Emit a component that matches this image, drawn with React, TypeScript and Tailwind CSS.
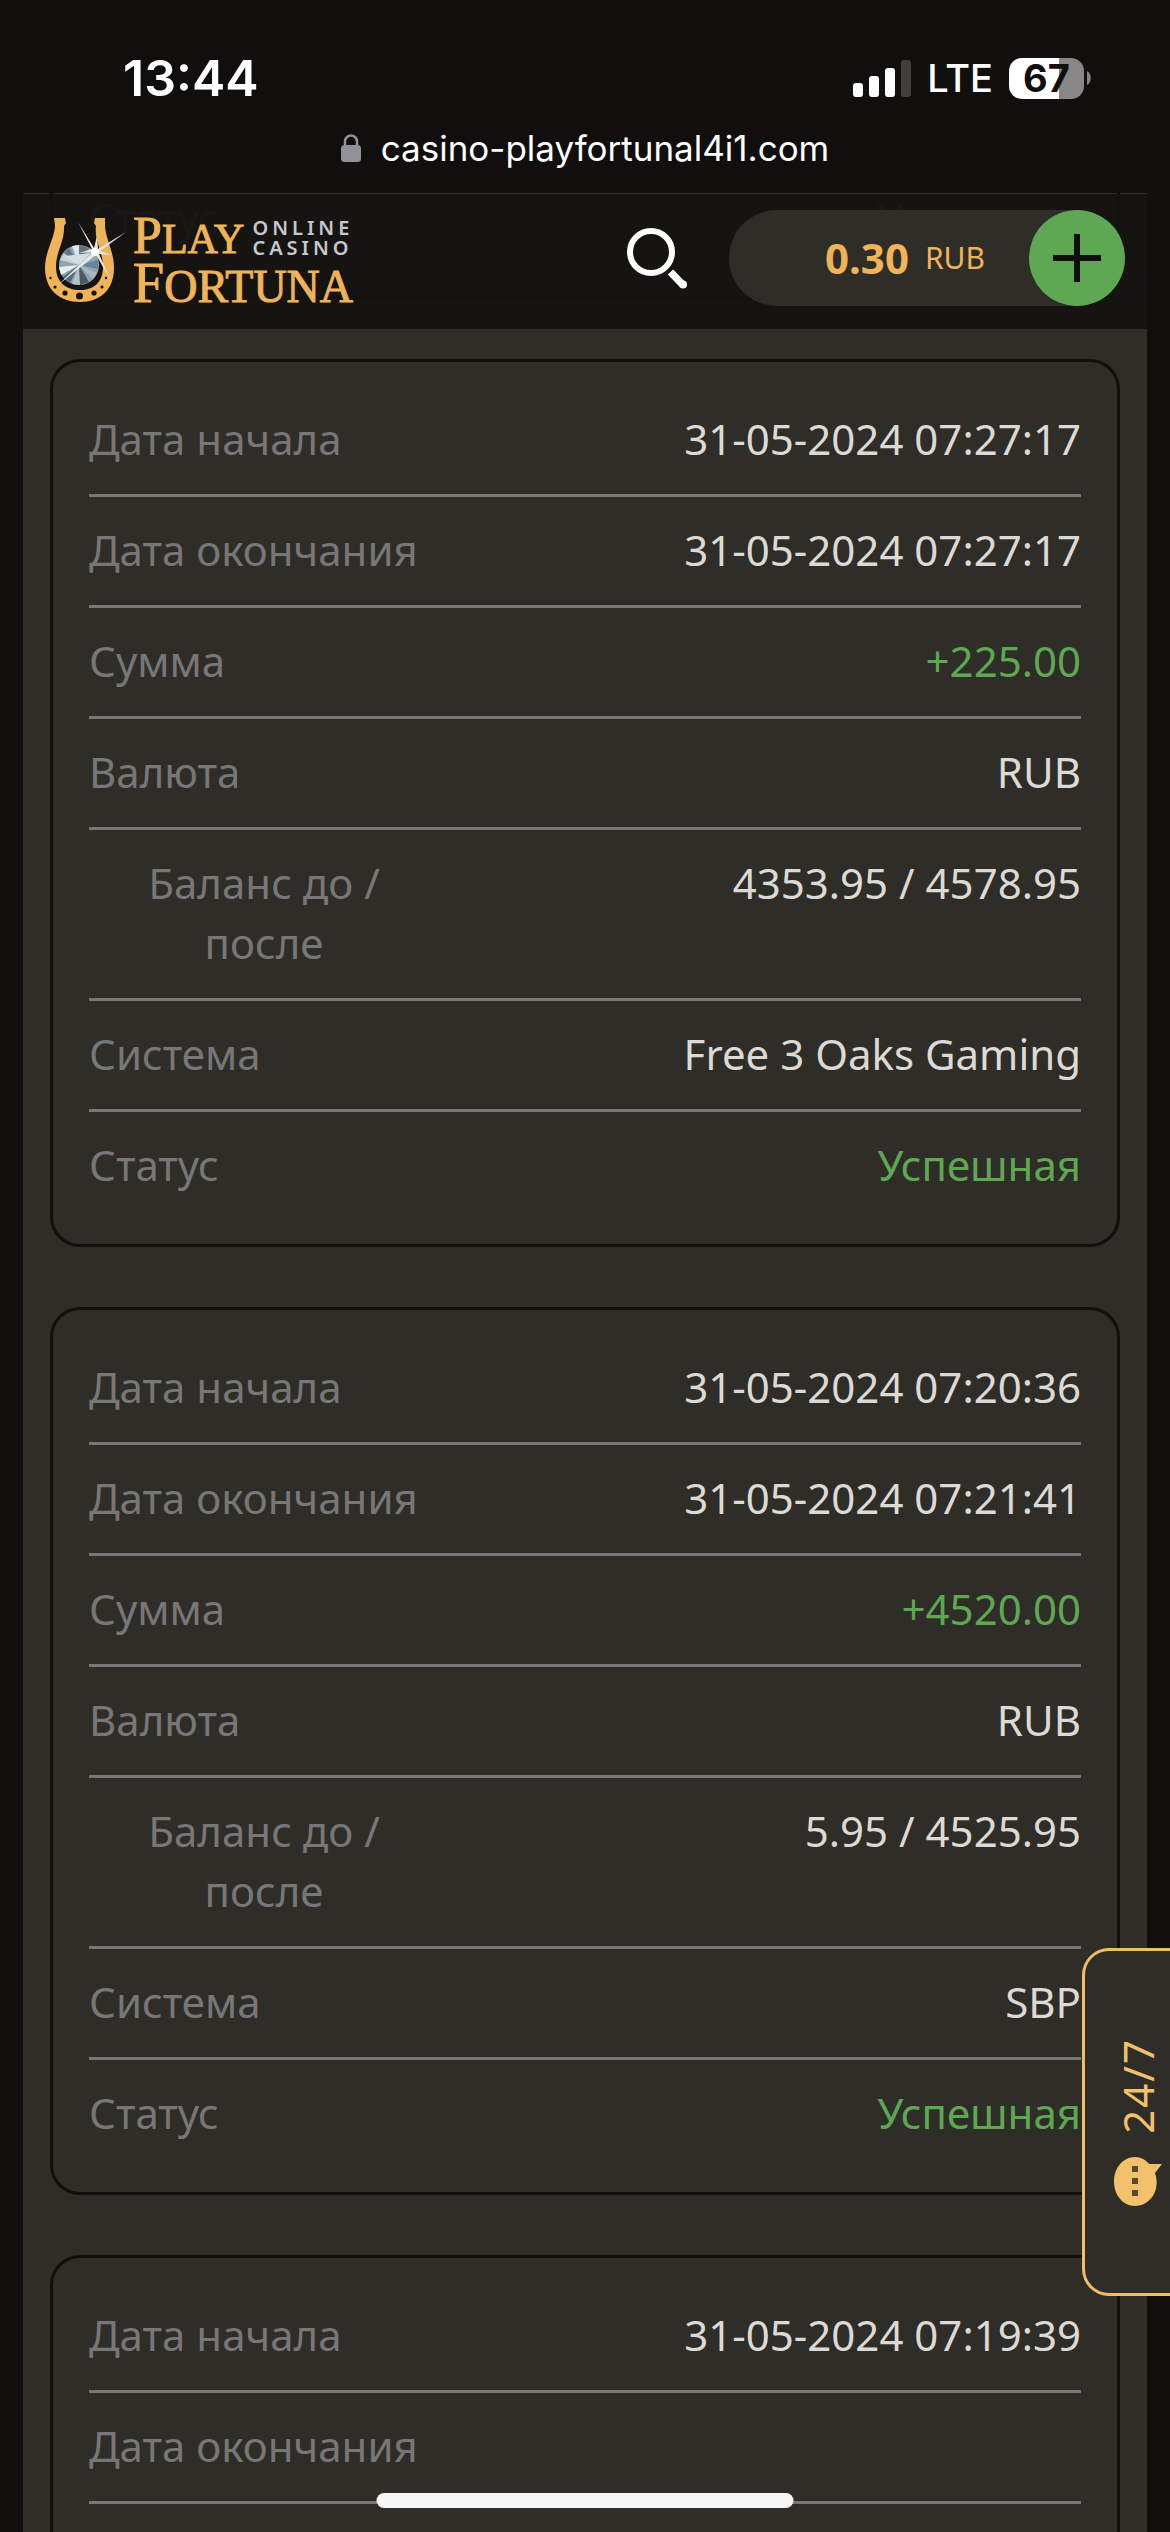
import { Fragment } from "react";

type Operation = {
  start: string;
  end: string;
  amount: string;
  currency: string;
  balance: string;
  system: string;
  status: string;
};

const operations: Operation[] = [
  {
    start: "31-05-2024 07:27:17",
    end: "31-05-2024 07:27:17",
    amount: "+225.00",
    currency: "RUB",
    balance: "4353.95 / 4578.95",
    system: "Free 3 Oaks Gaming",
    status: "Успешная",
  },
  {
    start: "31-05-2024 07:20:36",
    end: "31-05-2024 07:21:41",
    amount: "+4520.00",
    currency: "RUB",
    balance: "5.95 / 4525.95",
    system: "SBP",
    status: "Успешная",
  },
  {
    start: "31-05-2024 07:19:39",
    end: "",
    amount: "",
    currency: "RUB",
    balance: "",
    system: "",
    status: "",
  },
];

function StatusBar() {
  return (
    <div className="flex h-[193px] shrink-0 flex-col bg-[#100f0d] font-['Inter',sans-serif] text-white">
      <div className="flex items-center justify-between pt-12 pr-[79px] pl-[123px]">
        <time className="text-[50px] leading-[60px] font-semibold">13:44</time>
        <div className="flex items-center">
          <svg width="58" height="38" viewBox="0 0 58 38" aria-label="Сигнал">
            <rect x="0" y="24" width="10" height="14" rx="3" fill="#fff" />
            <rect x="16" y="17" width="10" height="21" rx="3" fill="#fff" />
            <rect x="32" y="9" width="10" height="29" rx="3" fill="#fff" />
            <rect x="48" y="1" width="10" height="37" rx="3" fill="#403f3e" />
          </svg>
          <span className="ml-4 text-[38px] leading-[60px] font-medium">LTE</span>
          <div className="ml-4 flex items-center gap-[3px]">
            <div className="flex h-[41px] w-[75px] items-center justify-center rounded-[13px] bg-linear-to-r from-white from-67% to-[#888785] to-67% text-[38px] leading-none font-bold text-[#100f0d]">
              67
            </div>
            <svg width="4" height="14" viewBox="0 0 4 14" aria-hidden="true">
              <path d="M0 0c5 3 5 11 0 14z" fill="#888785" />
            </svg>
          </div>
        </div>
      </div>
      <div className="mt-4 flex items-center justify-center gap-5">
        <svg width="20" height="28" viewBox="0 0 20 28" aria-hidden="true">
          <path d="M4 13V7.500a6 6 0 0 1 12 0V13" fill="none" stroke="#929196" strokeWidth="2.500" />
          <rect x="0" y="11" width="20" height="17" rx="3.500" fill="#929196" />
        </svg>
        <span className="text-[35px] leading-[48px]">casino-playfortunal4i1.com</span>
      </div>
    </div>
  );
}

function Logo() {
  return (
    <a href="#home" aria-label="Play Fortuna" className="mt-1 flex items-center text-[#efb358]">
      <svg width="84" height="86" viewBox="0 0 84 86" aria-hidden="true">
        <path
          d="M9 1h11l1 5-2 3C20 24 11 34 11 50c0 15 10 23 24 23s23-8 23-23C58 34 49 24 51 9l-2-3 1-5h10v7c0 13 9 26 9 43 0 22-14 34-34 34S0 73 0 51C0 34 10 21 10 8z"
          fill="#efb358"
        />
        <circle cx="34.500" cy="79" r="3.500" fill="#151412" />
        <circle cx="20" cy="76" r="2.600" fill="#151412" />
        <circle cx="49" cy="76" r="2.600" fill="#151412" />
        <circle cx="10" cy="70" r="1.600" fill="#151412" />
        <circle cx="57" cy="70" r="1.600" fill="#151412" />
        <circle cx="5.500" cy="61" r="1.200" fill="#151412" />
        <circle cx="61" cy="61" r="1.200" fill="#151412" />
        <circle cx="34" cy="48" r="20" fill="#8fa3ae" />
        <path d="M34 48 27 29l7-1z" fill="#dfe6ea" />
        <path d="M34 48V28l10 3z" fill="#5f7480" />
        <path d="M34 48 15 43l4-7z" fill="#c7d2d9" />
        <path d="M34 48 19 36l5-5z" fill="#617986" />
        <path d="M34 48 14 50l2 8z" fill="#e8edf0" />
        <path d="M34 48 18 60l7 6z" fill="#536873" />
        <path d="m34 48-7 19 8 1z" fill="#b4c2ca" />
        <path d="m34 48 1 20 9-3z" fill="#4b5a60" />
        <path d="m34 48 14 14 4-6z" fill="#a9b9c2" />
        <path d="m34 48 19 4v-9z" fill="#688595" />
        <path d="m34 48-14-9 26-3z" fill="#d5dee3" />
        <path d="M33 5 49 31l3-12 1 13 28-17-26 19 12 4-13-1 11 25-14-24-38 30 35-33-14 1 13-4z" fill="#e6e8e8" />
        <circle cx="50" cy="35" r="4" fill="#fff" />
      </svg>
      <div className="mt-1 ml-1 font-['Liberation_Serif',serif]">
        <div className="flex items-center">
          <span className="text-[42px] leading-[44px] [-webkit-text-stroke:1px_#efb358]">
            <span className="text-[52px]">P</span>LAY
          </span>
          <span className="ml-2 flex flex-col font-['Noto_Sans',sans-serif] text-[20px] leading-[20px] font-semibold tracking-[4px] text-[#c5c9cf]">
            <span>ONLINE</span>
            <span>CASINO</span>
          </span>
        </div>
        <div className="text-[46px] leading-[44px] [-webkit-text-stroke:1px_#efb358]">
          <span className="text-[56px]">F</span>ORTUNA
        </div>
      </div>
    </a>
  );
}

function Header() {
  return (
    <header className="absolute inset-x-0 top-px z-10 flex h-[135px] items-center justify-between bg-[#141310]/95 px-[22px] pb-2">
      <Logo />
      <div className="flex items-center gap-[42px]">
        <button type="button" aria-label="Поиск">
          <svg width="60" height="62" viewBox="0 0 60 62" fill="none" stroke="#fff">
            <circle cx="24" cy="25" r="21" strokeWidth="6" />
            <path d="M43.500 45 56 58" strokeWidth="7.500" />
            <circle cx="56" cy="57.500" r="2" strokeWidth="4" />
          </svg>
        </button>
        <div className="flex h-24 w-[396px] items-center justify-end rounded-full bg-[#2e2d28] text-[#efb358]">
          <span className="text-[42px] leading-[60px] font-bold">0.30</span>
          <span className="mr-11 ml-4 text-[30px] leading-[60px]">RUB</span>
          <button
            type="button"
            aria-label="Пополнить"
            className="flex size-24 items-center justify-center rounded-full bg-[#5fa853]"
          >
            <svg width="48" height="48" viewBox="0 0 48 48" stroke="#100f0d" strokeWidth="6">
              <path d="M24 0v48M0 24h48" />
            </svg>
          </button>
        </div>
      </div>
    </header>
  );
}

function OperationCard({ op }: { op: Operation }) {
  const rows: { label: string; value: string; green?: boolean }[] = [
    { label: "Дата начала", value: op.start },
    { label: "Дата окончания", value: op.end },
    { label: "Сумма", value: op.amount, green: true },
    { label: "Валюта", value: op.currency },
    { label: "Баланс до / после", value: op.balance },
    { label: "Система", value: op.system },
    { label: "Статус", value: op.status, green: true },
  ];
  return (
    <dl className="rounded-[30px] border-3 border-[#100f0d] px-9 py-6">
      {rows.map((row, i) => (
        <Fragment key={row.label}>
          {i > 0 && <div className="h-[3px] bg-[#777777]" />}
          <div className="flex justify-between pt-[23px] pb-[25px]">
            <dt className="max-w-[350px] text-center text-[#777777]">{row.label}</dt>
            <dd className={row.green ? "text-right text-[#5fa853]" : "text-right text-[#dcdad5]"}>{row.value}</dd>
          </div>
        </Fragment>
      ))}
    </dl>
  );
}

function ChatTab() {
  return (
    <button
      type="button"
      className="absolute right-0 bottom-[236px] z-20 flex h-[348px] w-[88px] flex-col items-center justify-center gap-6 rounded-l-[27px] border-3 border-r-0 border-[#f0bd6b] bg-[#2e2d28] pl-5 text-[#f3c06b]"
    >
      <span className="rotate-180 text-[42px] leading-[48px] tracking-[2px] [writing-mode:vertical-rl]">24/7</span>
      <svg width="48" height="49" viewBox="0 0 48 49" aria-hidden="true">
        <path d="M21 0c6 0 11 3 14 7h13l-7 9c6 17-5 33-20 33C9 49 0 38 0 24.500S9 0 21 0z" fill="#f3c06b" />
        <path d="M18 9h6v6h-6zM18 21h6v6h-6zM18 33h6v6h-6z" fill="#55492f" />
      </svg>
    </button>
  );
}

export default function App() {
  return (
    <div className="relative flex h-screen flex-col overflow-hidden bg-[#100f0d] font-['Noto_Sans',sans-serif] text-[42px] leading-[60px]">
      <StatusBar />
      <main className="relative mx-[23px] min-h-0 flex-1 overflow-hidden bg-[#2e2d28]">
        <Header />
        <div className="flex flex-col gap-[60px] px-[27px]">
          <div className="flex h-[106px] items-end justify-between overflow-hidden rounded-b-[30px] border-3 border-t-0 border-[#100f0d] px-9 pb-12">
            <span className="text-[#777777]">Статус</span>
            <span className="text-[#5fa853]">Успешная</span>
          </div>
          {operations.map((op) => (
            <OperationCard key={op.start} op={op} />
          ))}
        </div>
      </main>
      <ChatTab />
      <div className="absolute bottom-6 left-1/2 z-30 h-[15px] w-[417px] -translate-x-1/2 rounded-full bg-[#f7f7f7]" />
    </div>
  );
}
